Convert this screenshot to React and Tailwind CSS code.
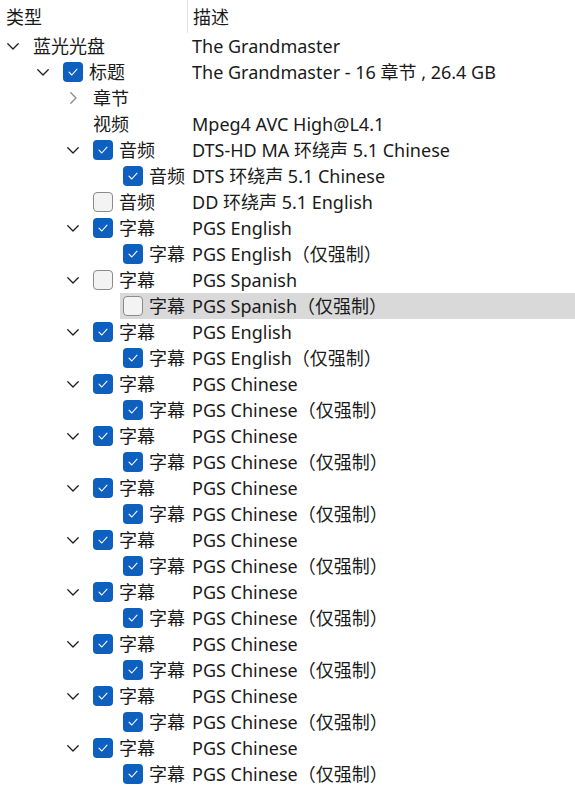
import React from "react";

const FONT = '"Noto Sans", "Noto Sans CJK SC", sans-serif';

const rows = [
  { l: 0, chev: "down", label: "蓝光光盘", desc: "The Grandmaster" },
  { l: 1, chev: "down", cb: true, label: "标题", desc: "The Grandmaster - 16 章节 , 26.4 GB" },
  { l: 2, chev: "right", label: "章节", desc: "" },
  { l: 2, label: "视频", desc: "Mpeg4 AVC High@L4.1" },
  { l: 2, chev: "down", cb: true, label: "音频", desc: "DTS-HD MA 环绕声 5.1 Chinese" },
  { l: 3, cb: true, label: "音频", desc: "DTS 环绕声 5.1 Chinese" },
  { l: 2, cb: false, label: "音频", desc: "DD 环绕声 5.1 English" },
  { l: 2, chev: "down", cb: true, label: "字幕", desc: "PGS English" },
  { l: 3, cb: true, label: "字幕", desc: "PGS English（仅强制）" },
  { l: 2, chev: "down", cb: false, label: "字幕", desc: "PGS Spanish" },
  { l: 3, cb: false, label: "字幕", desc: "PGS Spanish（仅强制）", sel: true },
  { l: 2, chev: "down", cb: true, label: "字幕", desc: "PGS English" },
  { l: 3, cb: true, label: "字幕", desc: "PGS English（仅强制）" },
];
for (let i = 0; i < 8; i++) {
  rows.push({ l: 2, chev: "down", cb: true, label: "字幕", desc: "PGS Chinese" });
  rows.push({ l: 3, cb: true, label: "字幕", desc: "PGS Chinese（仅强制）" });
}

const indentClass = ["w-0", "w-[30px]", "w-[60px]", "w-[90px]"];

function Chevron({ dir }) {
  if (dir === "down")
    return (
      <svg width="12" height="7" viewBox="0 0 12 7" fill="none">
        <path d="M0.8 0.8 L6 6 L11.2 0.8" stroke="#1f1f1f" strokeWidth="1.3" strokeLinejoin="round" strokeLinecap="round" />
      </svg>
    );
  if (dir === "right")
    return (
      <svg width="7" height="12" viewBox="0 0 7 12" fill="none">
        <path d="M0.8 0.8 L6 6 L0.8 11.2" stroke="#8a8a8a" strokeWidth="1.3" strokeLinejoin="round" strokeLinecap="round" />
      </svg>
    );
  return null;
}

function Checkbox({ checked }) {
  if (checked)
    return (
      <div className="w-5 h-5 shrink-0 rounded-[4px] bg-[#0f5fbf] flex items-center justify-center">
        <svg width="10" height="8" viewBox="0 0 10 8" fill="none">
          <path d="M1 4.2 L3.8 7 L9 1.2" stroke="#ffffff" strokeWidth="1.1" strokeLinejoin="round" strokeLinecap="round" />
        </svg>
      </div>
    );
  return <div className="w-5 h-5 shrink-0 rounded-[4px] bg-[#f3f3f3] border border-[#8b8b8b]" />;
}

function Row({ r }) {
  return (
    <div className="flex h-[26px] items-center">
      <div className="flex w-[192px] shrink-0 h-full items-center">
        <div className={indentClass[r.l] + " shrink-0"} />
        <div className={"w-[30px] shrink-0 h-full flex items-center " + (r.chev === "right" ? "pl-[10px]" : "pl-[7px]")}>
          <Chevron dir={r.chev} />
        </div>
        <div className={"flex-1 h-full flex items-center pl-[3px] overflow-hidden whitespace-nowrap " + (r.sel ? "bg-[#d9d9d9]" : "")}>
          {r.cb !== undefined && (
            <div className="mr-[6px] flex items-center">
              <Checkbox checked={r.cb} />
            </div>
          )}
          <span>{r.label}</span>
        </div>
      </div>
      <div className={"flex-1 h-full flex items-center whitespace-nowrap " + (r.sel ? "bg-[#d9d9d9]" : "")}>
        {r.desc}
      </div>
    </div>
  );
}

export default function App() {
  return (
    <div className="w-[575px] h-[788px] bg-white text-[#1a1a1a] text-[18px] leading-none overflow-hidden" style={{ fontFamily: FONT }}>
      <div className="flex h-[33px] items-center">
        <div className="w-[187px] shrink-0 pl-[6px]">类型</div>
        <div className="w-px h-full bg-[#e5e5e5]" />
        <div className="pl-[5px]">描述</div>
      </div>
      {rows.map((r, i) => (
        <Row key={i} r={r} />
      ))}
    </div>
  );
}
